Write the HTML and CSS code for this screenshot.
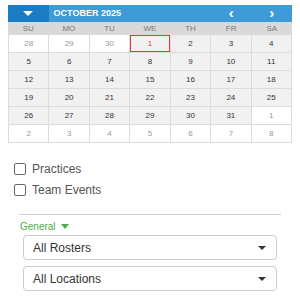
FILE: index.html
```html
<!DOCTYPE html>
<html lang="en">
<head>
  <meta charset="UTF-8" />
  <meta name="viewport" content="width=device-width, initial-scale=1.0" />
  <title>Schedule Filter</title>
  <link rel="stylesheet" href="styles.css">
</head>
<body>
  <div class="calendar">
    <div class="cal-head">
      <div class="cal-toggle"><span class="tri-down"></span></div>
      <div class="cal-title">OCTOBER 2025</div>
      <div class="cal-nav">&#8249;</div>
      <div class="cal-nav">&#8250;</div>
    </div>
    <div class="cal-days">
      <div>SU</div><div>MO</div><div>TU</div><div>WE</div><div>TH</div><div>FR</div><div>SA</div>
    </div>
    <div class="cal-grid" id="calGrid"></div>
  </div>

  <div class="checks">
    <label class="check"><span class="box"></span> Practices</label>
    <label class="check"><span class="box"></span> Team Events</label>
  </div>

  <div class="filters">
    <div class="general">General <span class="tri-green"></span></div>
    <div class="select">All Rosters <span class="caret"></span></div>
    <div class="select">All Locations <span class="caret"></span></div>
  </div>

  <script>
    // 28 Sep .. 8 Nov, October is the current month
    const grid = document.getElementById("calGrid");
    const days = [];
    [28, 29, 30].forEach(d => days.push({ d, out: true }));
    for (let d = 1; d <= 31; d++) days.push({ d, out: false, today: d === 1 });
    for (let d = 1; d <= 8; d++) days.push({ d, out: true });

    days.forEach(day => {
      const cell = document.createElement("div");
      cell.className = "cell" + (day.out ? " out" : "") + (day.today ? " today" : "");
      cell.textContent = day.d;
      grid.appendChild(cell);
    });
  </script>
</body>
</html>
```

FILE: styles.css
```css
body {
  font-family: 'Liberation Sans', Arial, sans-serif;
  margin: 0;
  padding: 5px 8px;
  color: #333;
  background: #fff;
}
.calendar {
  width: 284px;
}
.cal-head,
.cal-days,
.cal-grid {
  display: grid;
  grid-template-columns: repeat(7, 1fr);
}
.cal-head {
  height: 17px;
  background: #3f9ad8;
  color: #fff;
}
.cal-toggle {
  background: #1b7cc6;
  display: flex;
  align-items: center;
  justify-content: center;
}
.tri-down {
  width: 0;
  height: 0;
  border-left: 5px solid transparent;
  border-right: 5px solid transparent;
  border-top: 5px solid #fff;
}
.cal-title {
  grid-column: span 4;
  font-size: 9px;
  font-weight: bold;
  line-height: 17px;
  padding-left: 5px;
}
.cal-nav {
  text-align: center;
  font-size: 15px;
  font-weight: bold;
  line-height: 15px;
}
.cal-days {
  height: 13px;
  background: #d9d9d9;
  color: #777;
  font-size: 8px;
  line-height: 13px;
  text-align: center;
}
.cal-grid {
  border-left: 1px solid #dcdcdc;
}
.cell {
  height: 17px;
  line-height: 17px;
  text-align: center;
  font-size: 8px;
  background: #f1f1f1;
  border-right: 1px solid #dcdcdc;
  border-bottom: 1px solid #dcdcdc;
}
.cell.out {
  background: #fff;
  color: #999;
}
.cell.today {
  color: #e53935;
  box-shadow: inset 0 0 0 1px #e53935;
}
.checks {
  padding: 20px 0 0 6px;
}
.check {
  display: flex;
  align-items: center;
  gap: 6px;
  font-size: 12px;
  color: #555;
  height: 12px;
  margin-bottom: 9px;
}
.box {
  width: 10px;
  height: 10px;
  border: 1.5px solid #666;
  border-radius: 2px;
}
.filters {
  margin: 18px 11px 0 11px;
  border-top: 1px solid #ccc;
  padding-top: 5px;
}
.general {
  font-size: 10px;
  color: #4cae4c;
  display: flex;
  align-items: center;
  gap: 5px;
  height: 12px;
  margin-left: 1px;
  margin-bottom: 3px;
}
.tri-green {
  width: 0;
  height: 0;
  border-left: 4px solid transparent;
  border-right: 4px solid transparent;
  border-top: 5px solid #4cae4c;
}
.select {
  margin: 0 4px 6px 4px;
  height: 23px;
  border: 1px solid #ccc;
  border-radius: 4px;
  display: flex;
  align-items: center;
  justify-content: space-between;
  padding: 0 10px 0 9px;
  font-size: 12px;
  color: #333;
}
.caret {
  width: 0;
  height: 0;
  border-left: 4px solid transparent;
  border-right: 4px solid transparent;
  border-top: 4px solid #333;
}
```
